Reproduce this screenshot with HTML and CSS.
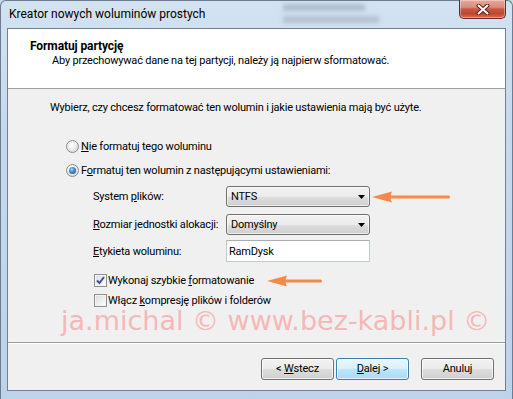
FILE: index.html
```html
<!DOCTYPE html>
<html lang="pl">
<head>
<meta charset="utf-8">
<title>Kreator nowych woluminów prostych</title>
<link rel="stylesheet" href="styles.css">
</head>
<body>
<div class="window">
  <div class="titlebar">
    <span class="title">Kreator nowych woluminów prostych</span>
    <div class="ghost" aria-hidden="true"><span class="g1"></span><span class="g2"></span></div>
    <div class="close">
      <svg width="14" height="11" viewBox="0 0 14 11"><path d="M2.5 1.5 L11.5 9.5 M11.5 1.5 L2.5 9.5" stroke="#5a2119" stroke-width="4" stroke-linecap="round" fill="none"/><path d="M2.5 1.5 L11.5 9.5 M11.5 1.5 L2.5 9.5" stroke="#ffffff" stroke-width="2" stroke-linecap="round" fill="none"/></svg>
    </div>
  </div>
  <div class="client">
    <div class="header">
      <div class="h-title">Formatuj partycję</div>
      <div class="h-sub">Aby przechowywać dane na tej partycji, należy ją najpierw sformatować.</div>
    </div>
    <div class="body">
      <div class="intro">Wybierz, czy chcesz formatować ten wolumin i jakie ustawienia mają być użyte.</div>
      <div class="options">
        <div class="radio-row"><span class="radio"></span><span><u>N</u>ie formatuj tego woluminu</span></div>
        <div class="radio-row second"><span class="radio checked"><span class="dot"></span></span><span>F<u>o</u>rmatuj ten wolumin z następującymi ustawieniami:</span></div>
        <div class="fields">
          <div class="field">
            <span class="lbl">System <u>p</u>lików:</span>
            <div class="combo"><span>NTFS</span><svg width="7" height="4" viewBox="0 0 7 4"><path d="M0 0 H7 L3.5 4 Z" fill="#000"/></svg></div>
            <svg class="arrow1" width="80" height="12" viewBox="0 0 80 12"><path d="M0 6 L20 0.5 Q17 6 20 11.5 Z" fill="#f58a48"/><rect x="15" y="4.5" width="63" height="3" rx="1.5" fill="#f58a48"/></svg>
          </div>
          <div class="field gap7">
            <span class="lbl"><u>R</u>ozmiar jednostki alokacji:</span>
            <div class="combo"><span>Domyślny</span><svg width="7" height="4" viewBox="0 0 7 4"><path d="M0 0 H7 L3.5 4 Z" fill="#000"/></svg></div>
          </div>
          <div class="field tall">
            <span class="lbl"><u>E</u>tykieta woluminu:</span>
            <div class="textbox">RamDysk</div>
          </div>
          <div class="check-row first">
            <span class="check"><svg width="11" height="11" viewBox="0 0 11 11"><path d="M2 5.5 L4.5 8 L9 2" stroke="#3d5391" stroke-width="2" fill="none"/></svg></span>
            <span>Wykonaj szybkie <u>f</u>ormatowanie</span>
            <svg class="arrow2" width="56" height="12" viewBox="0 0 56 12"><path d="M0 6 L20 0.5 Q17 6 20 11.5 Z" fill="#f58a48"/><rect x="15" y="4.5" width="40" height="3" rx="1.5" fill="#f58a48"/></svg>
          </div>
          <div class="check-row second">
            <span class="check"></span>
            <span>Włącz <u>k</u>ompresję plików i folderów</span>
          </div>
        </div>
      </div>
      <div class="watermark">ja.michal © www.bez-kabli.pl ©</div>
    </div>
    <div class="footer">
      <button class="btn">&lt; <u>W</u>stecz</button>
      <button class="btn default"><u>D</u>alej &gt;</button>
      <button class="btn cancel">Anuluj</button>
    </div>
  </div>
</div>
</body>
</html>
```
FILE: styles.css
```css
* { box-sizing: border-box; }
html, body { margin: 0; padding: 0; }
body {
  width: 513px;
  height: 399px;
  overflow: hidden;
  font-family: Roboto, "Noto Sans", sans-serif;
  font-size: 11px;
  letter-spacing: -0.2px;
  color: #000;
  background: #c8daec;
}
.window {
  width: 513px;
  height: 399px;
  display: flex;
  flex-direction: column;
  padding: 0 6px 8px 6px;
  background: linear-gradient(to bottom, #d3e2f1 0%, #c6d9ec 30%, #bdd3ea 100%);
  border: 1px solid #6b7d92;
  border-bottom: none;
  border-radius: 6px 6px 0 0;
}
.titlebar {
  height: 27px;
  display: flex;
  align-items: flex-start;
}
.title {
  padding: 6px 0 0 2px;
  line-height: 15px;
  font-size: 12px;
  letter-spacing: 0;
  white-space: nowrap;
}
.ghost {
  margin-left: 78px;
  margin-top: 3px;
  width: 100px;
  height: 22px;
  display: flex;
  flex-direction: column;
  gap: 5px;
  filter: blur(2px);
  opacity: 0.5;
}
.ghost .g1 { display: block; width: 82px; height: 7px; background: #8e9bab; }
.ghost .g2 { display: block; width: 96px; height: 7px; background: #98a4b3; }
.close {
  margin-left: auto;
  width: 47px;
  height: 19px;
  margin-top: -1px;
  border: 1px solid #6a2a22;
  border-top: none;
  border-radius: 0 0 5px 5px;
  background: linear-gradient(to bottom, #e6aa9c 0%, #d98c7c 40%, #c85a42 50%, #c1452d 75%, #d3714f 100%);
  box-shadow: inset 0 0 0 1px rgba(255,255,255,0.35);
  display: flex;
  align-items: center;
  justify-content: center;
}
.client {
  flex: 1;
  display: flex;
  flex-direction: column;
  border: 1px solid #6f8093;
  background: #f0f0f0;
}
.header {
  height: 60px;
  background: #fff;
  border-bottom: 1px solid #a0a0a0;
  padding: 10px 0 0 22px;
  line-height: 15px;
}
.h-title { font-weight: bold; font-size: 12px; letter-spacing: -0.1px; }
.h-sub { padding-left: 22px; margin-top: -1px; }
.body {
  flex: 1;
  padding: 11px 0 0 42px;
  line-height: 15px;
  white-space: nowrap;
}
.options { margin-top: 24px; }
.radio-row {
  display: flex;
  align-items: center;
  height: 15px;
  padding-left: 16px;
  gap: 2px;
}
.radio-row.second { margin-top: 9px; }
.radio {
  width: 13px;
  height: 13px;
  border-radius: 50%;
  border: 1px solid #8b8c8c;
  background: radial-gradient(circle at 40% 35%, #ffffff 0%, #ececec 45%, #cfcfcf 100%);
  display: flex;
  align-items: center;
  justify-content: center;
  flex: none;
}
.dot {
  width: 7px;
  height: 7px;
  border-radius: 50%;
  background: radial-gradient(circle at 40% 35%, #a8d4f6 0%, #3c86c8 45%, #1b4f8c 100%);
}
.fields { margin-left: 43px; margin-top: 8px; }
.field {
  display: flex;
  align-items: center;
  height: 21px;
}
.field.gap7 { margin-top: 7px; }
.field.tall { margin-top: 5px; height: 22px; }
.lbl { width: 133px; flex: none; }
.combo {
  width: 144px;
  height: 21px;
  border: 1px solid #707070;
  border-radius: 3px;
  background: linear-gradient(to bottom, #f2f2f2 0%, #ebebeb 50%, #dddddd 51%, #cfcfcf 100%);
  box-shadow: inset 0 0 0 1px rgba(255,255,255,0.6);
  display: flex;
  align-items: center;
  justify-content: space-between;
  padding: 0 4px 0 4px;
  flex: none;
}
.arrow1 { margin-left: 2px; flex: none; }
.textbox {
  width: 144px;
  height: 22px;
  background: #fff;
  border: 1px solid #c5c9d1;
  border-top-color: #abadb3;
  padding-left: 2px;
  display: flex;
  align-items: center;
  flex: none;
}
.check-row {
  display: flex;
  align-items: center;
  height: 15px;
  gap: 1px;
}
.check-row.first { margin-top: 11px; }
.check-row.second { margin-top: 5px; }
.check {
  width: 13px;
  height: 13px;
  margin-left: 1px;
  border: 1px solid #8f8f8f;
  background: linear-gradient(135deg, #dcdcdc 0%, #f0f0f0 60%, #fbfbfb 100%);
  box-shadow: inset 0 0 0 1px #f4f4f4;
  display: flex;
  align-items: center;
  justify-content: center;
  flex: none;
}
.arrow2 { margin-left: 12px; flex: none; }
.watermark {
  margin-top: 1px;
  margin-left: 11px;
  font-family: "DejaVu Sans", Verdana, sans-serif;
  font-size: 27px;
  line-height: 24px;
  letter-spacing: 0;
  color: #f4b8b8;
}
.footer {
  height: 48px;
  border-top: 1px solid #a0a0a0;
  box-shadow: inset 0 1px 0 #ffffff;
  display: flex;
  justify-content: flex-end;
  align-items: flex-start;
  gap: 2px;
  padding: 15px 11px 0 0;
}
.btn {
  width: 73px;
  height: 22px;
  font-family: inherit;
  font-size: 11px;
  letter-spacing: -0.2px;
  color: #000;
  border: 1px solid #707070;
  border-radius: 3px;
  background: linear-gradient(to bottom, #f2f2f2 0%, #ebebeb 50%, #dddddd 51%, #cfcfcf 100%);
  box-shadow: inset 0 0 0 1px rgba(255,255,255,0.7);
  padding: 0;
  line-height: 18px;
}
.btn.default {
  border-color: #3c7fb1;
  background: linear-gradient(to bottom, #eaf6fd 0%, #d9f0fc 50%, #bee6fd 51%, #a7d9f5 100%);
}
.btn.cancel { margin-left: 10px; }
```
